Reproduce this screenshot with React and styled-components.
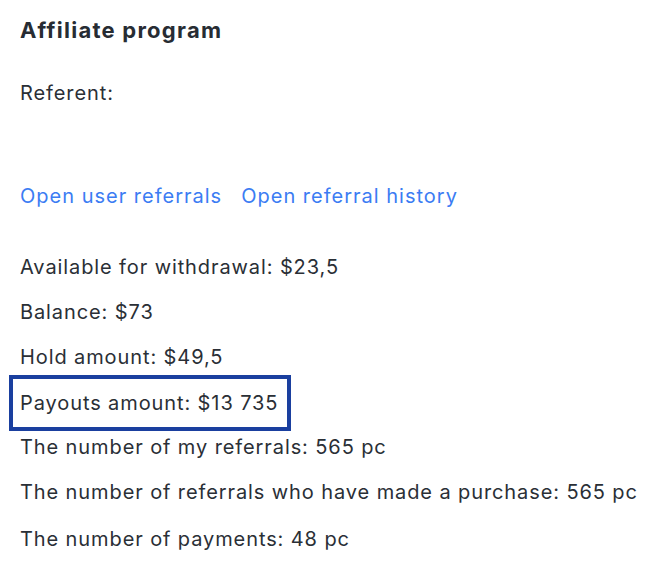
import React from 'react';
import styled, { createGlobalStyle } from 'styled-components';

const GlobalStyle = createGlobalStyle`
  body {
    margin: 0;
    background: #ffffff;
    font-family: Inter, "Noto Sans", sans-serif;
    color: #2a2f36;
    letter-spacing: 0.9px;
  }
`;

const Panel = styled.section`
  display: flex;
  flex-direction: column;
  padding: 14px 20px 0;
`;

const Title = styled.h2`
  margin: 0;
  font-size: 22px;
  font-weight: 700;
  line-height: 32px;
  letter-spacing: 1.25px;
  color: #272c33;
`;

const Label = styled.p`
  margin: 31px 0 0;
  font-size: 20px;
  line-height: 32px;
`;

const Links = styled.div`
  display: flex;
  gap: 19px;
  margin-top: 71px;
`;

const Link = styled.a`
  font-size: 20px;
  line-height: 32px;
  letter-spacing: 1px;
  color: #3b7cf3;
  text-decoration: none;
  cursor: pointer;
`;

const Stats = styled.div`
  display: flex;
  flex-direction: column;
  margin-top: 33px;
`;

const Row = styled.div`
  height: 45px;
  font-size: 20px;
  line-height: 45px;

  &:last-child {
    margin-top: 2px;
  }
`;

const Highlight = styled.span`
  display: inline-block;
  line-height: 46px;
  padding: 0 8px 0 6px;
  margin: 0 -8px 0 -6px;
  outline: 4px solid #1a3f9f;
  outline-offset: 1px;
`;

const stats = [
  { text: 'Available for withdrawal: $23,5' },
  { text: 'Balance: $73' },
  { text: 'Hold amount: $49,5' },
  { text: 'Payouts amount: $13 735', marked: true },
  { text: 'The number of my referrals: 565 pc' },
  { text: 'The number of referrals who have made a purchase: 565 pc' },
  { text: 'The number of payments: 48 pc' },
];

export default function App() {
  return (
    <>
      <GlobalStyle />
      <Panel>
        <Title>Affiliate program</Title>
        <Label>Referent:</Label>
        <Links>
          <Link>Open user referrals</Link>
          <Link>Open referral history</Link>
        </Links>
        <Stats>
          {stats.map((s) => (
            <Row key={s.text}>
              {s.marked ? <Highlight>{s.text}</Highlight> : s.text}
            </Row>
          ))}
        </Stats>
      </Panel>
    </>
  );
}
